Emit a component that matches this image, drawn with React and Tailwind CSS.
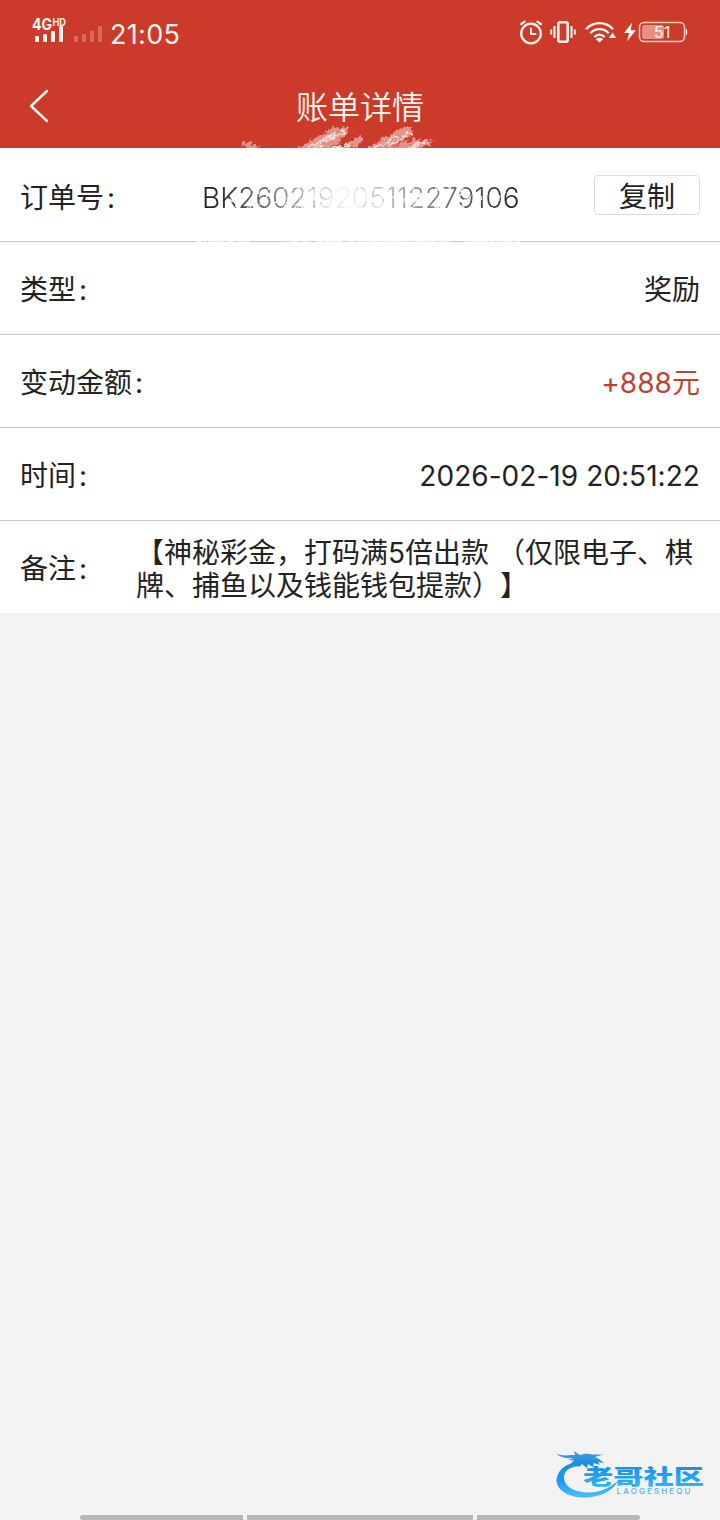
import { clsx } from 'clsx';

const rows = [
  { label: '类型', value: '奖励' },
  { label: '变动金额', value: '+888元', accent: true },
  { label: '时间', value: '2026-02-19 20:51:22' },
];

const SignalIcon = () => (
  <svg width="74" height="32" viewBox="0 0 74 32" fill="#fff5ee">
    <text x="0" y="14" fontSize="15.500" fontWeight="700" fontFamily="Inter" textLength="20" lengthAdjust="spacingAndGlyphs">4G</text>
    <text x="20.500" y="9.500" fontSize="10" fontWeight="700" fontFamily="Inter" textLength="13.500" lengthAdjust="spacingAndGlyphs">HD</text>
    <rect x="3" y="20" width="4" height="6" rx="1" />
    <rect x="11" y="18" width="4" height="8" rx="1" />
    <rect x="19" y="15" width="4" height="11" rx="1" />
    <rect x="27" y="10" width="4" height="16" rx="1" />
    <g opacity="0.25">
      <rect x="42" y="20" width="4" height="6" rx="1" />
      <rect x="50" y="18" width="4" height="8" rx="1" />
      <rect x="58" y="15" width="4" height="11" rx="1" />
      <rect x="66" y="10" width="4" height="16" rx="1" />
    </g>
  </svg>
);

const AlarmIcon = () => (
  <svg width="24" height="26" viewBox="0 0 24 26" fill="none" stroke="#fff5ee" strokeWidth="2.3" strokeLinecap="round">
    <circle cx="12" cy="14.500" r="9.800" />
    <path d="M12 9.500v5.500h4.500" strokeWidth="2" />
    <path d="M2.200 5 5.600 2.600M21.800 5 18.400 2.600" strokeWidth="2.200" />
  </svg>
);

const VibrateIcon = () => (
  <svg width="26" height="24" viewBox="0 0 26 24" fill="none" stroke="#fff5ee" strokeWidth="2">
    <rect x="8.300" y="2.300" width="9.400" height="19.400" rx="2" strokeWidth="2.600" />
    <path d="M4.500 6v12M21.500 6v12M1.200 9.500v5M24.800 9.500v5" />
  </svg>
);

const WifiIcon = () => (
  <svg width="31" height="22" viewBox="0 0 31 22" fill="none" stroke="#fff5ee" strokeWidth="2.3">
    <path d="M1 8.200C8.500.2 20.500.2 28 8.200" />
    <path d="M5.300 12.200C10.500 6.700 18.500 6.700 23.700 12.200" />
    <path d="M9.400 16C12.400 13 16.600 13 19.600 16" />
    <path d="M10.800 18.300C13 16.300 16 16.300 18.200 18.300L14.500 21.500Z" fill="#fff5ee" stroke="none" />
    <path d="M24 17 27.500 11.500 31 17Z" fill="#fff5ee" stroke="none" />
  </svg>
);

const BatteryIcon = () => (
  <svg width="64" height="22" viewBox="0 0 64 22">
    <path d="M8.200 1.500 0 12H5.200L2.800 20.500 12 9.200H6.600Z" fill="#fff5ee" />
    <rect x="15.500" y="1.500" width="45" height="19" rx="4.500" fill="none" stroke="#f9d3c8" strokeWidth="1.500" />
    <rect x="18" y="4" width="22" height="14" rx="2.500" fill="#e88f84" />
    <path d="M61.800 7.500C63.700 8 63.700 14 61.800 14.500Z" fill="#fff5ee" />
    <text x="38" y="17" textAnchor="middle" fontSize="16.500" fontWeight="400" fontFamily="Inter" fill="#fff5ee">51</text>
  </svg>
);

const BrandLogo = () => (
  <svg width="152" height="56" viewBox="0 0 152 56">
    <defs>
      <linearGradient id="brand" x1="0" y1="0" x2="0" y2="52" gradientUnits="userSpaceOnUse">
        <stop offset="0" stopColor="#4f9fd0" />
        <stop offset="0.3" stopColor="#1a8fe6" />
        <stop offset="0.6" stopColor="#1a9bf2" />
        <stop offset="0.9" stopColor="#48bcfb" />
      </linearGradient>
      <linearGradient id="brandText" x1="0" y1="-19" x2="0" y2="2" gradientUnits="userSpaceOnUse">
        <stop offset="0" stopColor="#168cea" />
        <stop offset="1" stopColor="#2fb0fa" />
      </linearGradient>
    </defs>
    <g fill="url(#brand)">
      <path d="M23 13C8 14 .5 23 .5 32 1.500 42.500 14 48.500 28 48.500 44 48.500 57 42 62 32 52 40 43 43.500 33 43.500 18 43.500 8 37 8 28.500 8 21 15 17 25 17Z" />
      <path d="M0 4.500C4 6.500 10 7 15 6L19 6 18 2 24 6 30 4.500 37 5.500 47 5.500 39 8 43 10 48 14 42 13 44 16 38 14 37 18 32 15 31 19 26 15 23 18 20 14 14 15 18 11.500 12 11 18 9C11 10 4 8.500 0 4.500Z" />
    </g>
    <g transform="translate(27 34.500) scale(1.44 1)">
      <text fontSize="21" fontWeight="900" fontFamily="'Noto Sans CJK SC', sans-serif" fill="url(#brandText)">老哥社区</text>
    </g>
    <text x="60.500" y="44.500" fontSize="8" fontWeight="500" fontFamily="Inter" textLength="74" fill="#4fb2f3">LAOGESHEQU</text>
  </svg>
);

// white brush marks left over the order number and the edge of the header
const BrushMarks = () => (
  <svg className="absolute left-[180px] top-[120px] pointer-events-none" width="360" height="130" viewBox="180 120 360 130" fill="none" stroke="#fff" strokeLinecap="round">
    <defs>
      <filter id="rough" x="-5%" y="-10%" width="110%" height="120%">
        <feTurbulence type="fractalNoise" baseFrequency="0.22" numOctaves="3" seed="4" result="noise" />
        <feDisplacementMap in="SourceGraphic" in2="noise" scale="9" xChannelSelector="R" yChannelSelector="G" />
        <feGaussianBlur stdDeviation="0.6" />
      </filter>
    </defs>
    <g filter="url(#rough)">
      <g strokeWidth="4" strokeOpacity="0.45">
        <path d="M302 148 332 131M306 150 346 129M312 151 345 134M322 150 340 140M330 151 360 142M341 150 361 138M304 150 319 140M316 143 338 128" />
        <path d="M370 149 398 132M374 151 411 129M382 150 410 134M390 150 416 140M400 150 428 141M414 150 430 142M384 142 406 128" />
        <path d="M243 143 250 150M248 145 262 150" />
      </g>
      <g strokeWidth="2" strokeOpacity="0.7">
        <path d="M304 150 334 134M315 148 344 131M329 150 350 144M374 149 397 136M388 146 410 133M402 150 426 142" />
      </g>
      <path d="M196 242H250M284 242H450M466 242H520" strokeWidth="3" strokeOpacity="0.75" />
      <g strokeWidth="1.8" strokeOpacity="0.9">
        <path d="M222 214 240 190M232 215 250 188M243 215 261 188M254 216 274 186M266 216 285 187M278 216 298 187M290 216 310 187M303 216 323 187M315 216 336 187M327 216 348 187M340 216 361 187M354 216 375 187M367 216 388 187M380 216 400 187M393 216 413 187M406 216 426 187M419 216 439 187M432 216 451 187M445 216 463 188M457 216 475 189M470 215 486 193M486 215 505 191" />
      </g>
      <path d="M300 212 318 190M325 212 340 190M352 212 372 188M378 212 386 190" strokeWidth="6" strokeOpacity="0.6" />
    </g>
  </svg>
);

const Label = ({ children, className }) => (
  <span className={clsx('shrink-0', className)}>
    {children}
    <span className="ml-[3px]">:</span>
  </span>
);

const Row = ({ label, value, accent }) => (
  <div className="flex h-[93px] items-center justify-between border-b border-[#c8c8c8] px-5 pt-[5px]">
    <Label>{label}</Label>
    <span className={clsx('tracking-[0.05px]', accent && 'text-[#bd4433]')}>{value}</span>
  </div>
);

export default function App() {
  return (
    <div className="relative flex h-[1520px] w-[720px] flex-col overflow-hidden bg-[#f3f3f3] font-[Inter,'Noto_Sans_CJK_SC',sans-serif] text-[28px] leading-[33px] font-[390] text-[#222] [text-spacing-trim:space-all]">
      <header className="h-[148px] bg-[#cc3b29] text-[#fff5ee]">
        <div className="flex h-16 items-center justify-between px-8">
          <div className="flex items-center gap-1">
            <SignalIcon />
            <span className="pt-1 text-[27px] tracking-[0.3px]">21:05</span>
          </div>
          <div className="flex items-center">
            <AlarmIcon />
            <span className="ml-[7px]"><VibrateIcon /></span>
            <span className="ml-[9px]"><WifiIcon /></span>
            <span className="ml-2"><BatteryIcon /></span>
          </div>
        </div>
        <div className="grid h-[84px] grid-cols-[1fr_auto_1fr] items-center px-[29px]">
          <svg width="20" height="34" viewBox="0 0 20 34" fill="none" stroke="currentColor" strokeWidth="2.4" strokeLinecap="round" strokeLinejoin="round">
            <path d="M18 2 2 17 18 32" />
          </svg>
          <h1 className="pt-[2px] text-[32px] font-[350]">账单详情</h1>
        </div>
      </header>

      <main className="bg-white">
        <div className="flex h-[94px] items-center border-b border-[#c8c8c8] px-5">
          <Label className="w-[182px] pt-[7px]">订单号</Label>
          <span className="bg-linear-to-r from-[#222] from-3% via-[#f2f2f2] via-45% to-[#222] bg-clip-text pt-[7px] font-light text-transparent">BK260219205112279106</span>
          <button className="ml-auto h-10 w-[106px] rounded border border-[#ddd] pt-[5px]">复制</button>
        </div>
        {rows.map((row) => (
          <Row key={row.label} {...row} />
        ))}
        <div className="flex h-[92px] items-center px-5 pt-[5px]">
          <Label className="w-[116px]">备注</Label>
          <p>【神秘彩金，打码满5倍出款 （仅限电子、棋牌、捕鱼以及钱能钱包提款）】</p>
        </div>
      </main>

      <footer className="mt-auto">
        <div className="flex justify-end pr-3">
          <BrandLogo />
        </div>
        <div className="mt-[10px] flex h-[5px] justify-center gap-1">
          <span className="w-[163px] rounded-l-full bg-[#b8b8b8]" />
          <span className="w-[226px] bg-[#b8b8b8]" />
          <span className="w-[163px] rounded-r-full bg-[#b8b8b8]" />
        </div>
      </footer>

      <BrushMarks />
    </div>
  );
}
